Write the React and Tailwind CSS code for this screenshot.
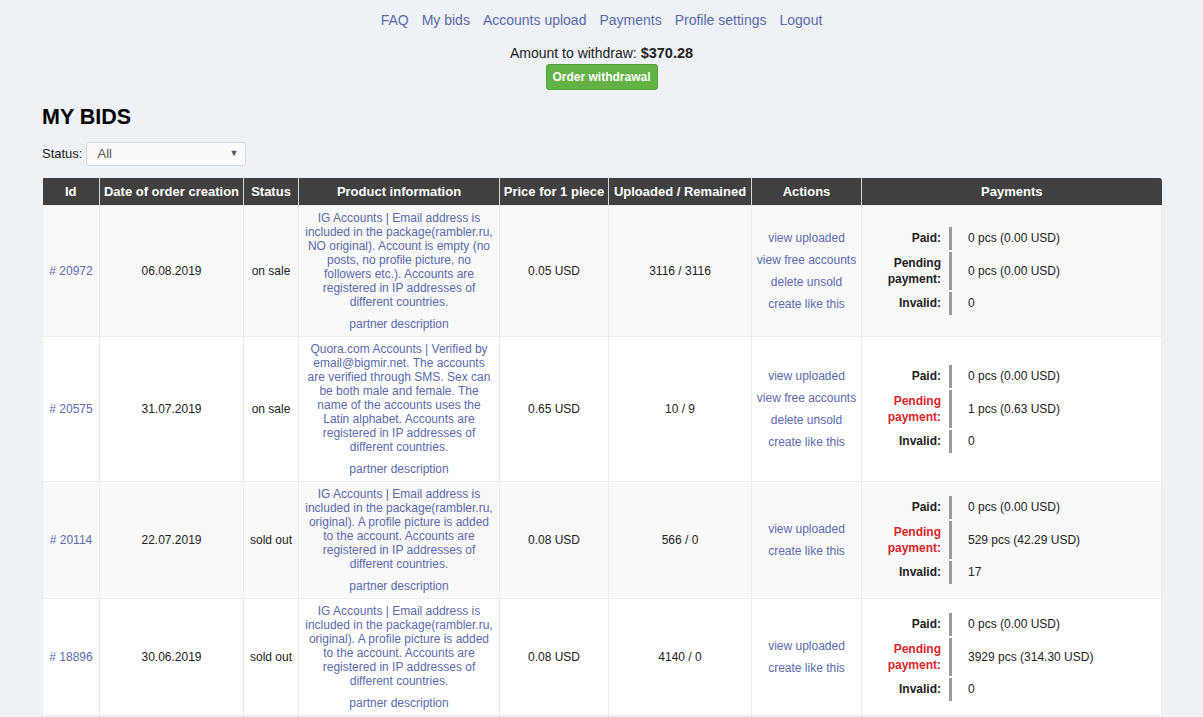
import React from 'react';

const LINK = 'text-[#5a6aad]';

const bids = [
  {
    id: '20972',
    date: '06.08.2019',
    status: 'on sale',
    info: 'IG Accounts | Email address is included in the package(rambler.ru, NO original). Account is empty (no posts, no profile picture, no followers etc.). Accounts are registered in IP addresses of different countries.',
    price: '0.05 USD',
    uploaded: '3116 / 3116',
    actions: ['view uploaded', 'view free accounts', 'delete unsold', 'create like this'],
    paid: '0 pcs (0.00 USD)',
    pending: '0 pcs (0.00 USD)',
    pendingRed: false,
    invalid: '0',
  },
  {
    id: '20575',
    date: '31.07.2019',
    status: 'on sale',
    info: 'Quora.com Accounts | Verified by email@bigmir.net. The accounts are verified through SMS. Sex can be both male and female. The name of the accounts uses the Latin alphabet. Accounts are registered in IP addresses of different countries.',
    price: '0.65 USD',
    uploaded: '10 / 9',
    actions: ['view uploaded', 'view free accounts', 'delete unsold', 'create like this'],
    paid: '0 pcs (0.00 USD)',
    pending: '1 pcs (0.63 USD)',
    pendingRed: true,
    invalid: '0',
  },
  {
    id: '20114',
    date: '22.07.2019',
    status: 'sold out',
    info: 'IG Accounts | Email address is included in the package(rambler.ru, original). A profile picture is added to the account. Accounts are registered in IP addresses of different countries.',
    price: '0.08 USD',
    uploaded: '566 / 0',
    actions: ['view uploaded', 'create like this'],
    paid: '0 pcs (0.00 USD)',
    pending: '529 pcs (42.29 USD)',
    pendingRed: true,
    invalid: '17',
  },
  {
    id: '18896',
    date: '30.06.2019',
    status: 'sold out',
    info: 'IG Accounts | Email address is included in the package(rambler.ru, original). A profile picture is added to the account. Accounts are registered in IP addresses of different countries.',
    price: '0.08 USD',
    uploaded: '4140 / 0',
    actions: ['view uploaded', 'create like this'],
    paid: '0 pcs (0.00 USD)',
    pending: '3929 pcs (314.30 USD)',
    pendingRed: true,
    invalid: '0',
  },
];

const headers = [
  ['Id', 'w-[57px]'],
  ['Date of order creation', 'w-[144px]'],
  ['Status', 'w-[55px]'],
  ['Product information', 'w-[201px]'],
  ['Price for 1 piece', 'w-[109px]'],
  ['Uploaded / Remained', 'w-[143px]'],
  ['Actions', 'w-[110px]'],
  ['Payments', 'w-[300px]'],
];

const Payments = ({ bid }) => (
  <div className="grid grid-cols-[87px_1fr] gap-y-[2px] text-left">
    <div className="text-right pr-[8px] font-bold leading-[16px] py-[3.5px]">Paid:</div>
    <div className="border-l-[3px] border-[#9a9a9a] pl-[16px] flex items-center">{bid.paid}</div>
    <div className={`text-right pr-[8px] font-bold leading-[16px] py-[3px] ${bid.pendingRed ? 'text-[#d9262b]' : ''}`}>
      Pending<br />payment:
    </div>
    <div className="border-l-[3px] border-[#9a9a9a] pl-[16px] flex items-center">{bid.pending}</div>
    <div className="text-right pr-[8px] font-bold leading-[16px] py-[3.5px]">Invalid:</div>
    <div className="border-l-[3px] border-[#9a9a9a] pl-[16px] flex items-center">{bid.invalid}</div>
  </div>
);

const App = () => {
  return (
    <div
      className="min-h-[717px] bg-[#eef1f5] text-[#222] pb-4"
      style={{ fontFamily: '"Liberation Sans", Arial, sans-serif' }}
    >
      <nav className="pt-[11px] flex justify-center gap-[13px] text-[14px] leading-[18px]">
        {['FAQ', 'My bids', 'Accounts upload', 'Payments', 'Profile settings', 'Logout'].map(l => (
          <a key={l} href="#" className={LINK}>{l}</a>
        ))}
      </nav>

      <div className="mt-[15px] text-center text-[14px] leading-[18px]">
        Amount to withdraw: <span className="font-bold text-[14.5px]">$370.28</span>
      </div>
      <div className="mt-[2px] flex justify-center">
        <button className="h-[26px] w-[112px] rounded-[3px] border border-[#52a03a] bg-[#62b246] text-white text-[12px] font-bold">
          Order withdrawal
        </button>
      </div>

      <div className="px-[42px]">
        <h1 className="mt-[15px] text-[21.5px] leading-[24px] font-bold text-black">MY BIDS</h1>

        <div className="mt-[13px] flex items-center gap-[4px] text-[13px]">
          <span>Status:</span>
          <div className="h-[24px] w-[160px] rounded-[3px] border border-[#d6d9dd] bg-[#fafafa] flex items-center justify-between pl-[10px] pr-[7px] text-[#555]">
            <span>All</span>
            <span className="text-[9px] text-[#555]">▼</span>
          </div>
        </div>

        <table className="mt-[12px] w-[1119px] table-fixed border-collapse text-[12px]">
          <colgroup>
            {headers.map(([h, w]) => <col key={h} className={w} />)}
          </colgroup>
          <thead>
            <tr className="bg-[#404040] text-white">
              {headers.map(([h], i) => (
                <th
                  key={h}
                  className={`h-[27px] text-[13px] font-bold text-center whitespace-nowrap px-0 ${i > 0 ? 'border-l border-[#d8d8d8]' : ''} ${i === 7 ? 'rounded-tr-[3px]' : ''}`}
                >
                  {h}
                </th>
              ))}
            </tr>
          </thead>
          <tbody>
            {bids.map((b, idx) => (
              <tr key={b.id} className={idx % 2 === 0 ? 'bg-[#f9f9f9]' : 'bg-white'}>
                <td className={`border border-[#eaedf1] text-center ${LINK}`}># {b.id}</td>
                <td className="border border-[#eaedf1] text-center">{b.date}</td>
                <td className="border border-[#eaedf1] text-center">{b.status}</td>
                <td className={`border border-[#eaedf1] text-center px-[6px] pt-[5px] pb-[5px] leading-[14px] ${LINK}`}>
                  <div>{b.info}</div>
                  <div className="mt-[8px]">partner description</div>
                </td>
                <td className="border border-[#eaedf1] text-center">{b.price}</td>
                <td className="border border-[#eaedf1] text-center">{b.uploaded}</td>
                <td className={`border border-[#eaedf1] text-center leading-[22px] ${LINK}`}>
                  {b.actions.map(a => <div key={a}>{a}</div>)}
                </td>
                <td className="border border-[#eaedf1]">
                  <Payments bid={b} />
                </td>
              </tr>
            ))}
          </tbody>
        </table>
      </div>
    </div>
  );
};

export default App;
